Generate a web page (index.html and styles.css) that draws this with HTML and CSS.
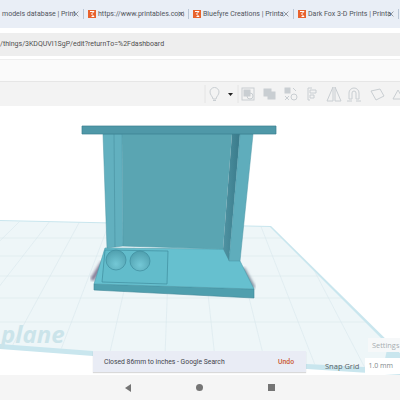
FILE: index.html
```html
<!DOCTYPE html>
<html lang="en">
  <head>
    <meta charset="UTF-8" />
    <title>Tinkercad</title>
    <link rel="stylesheet" href="styles.css">
  </head>
  <body>
    <div class="tabs">
      <div class="tab tab-first">
        <span class="tab-title">models database | Print</span>
        <svg class="tab-close" viewBox="0 0 10 10"><path d="M1 1L9 9M9 1L1 9" /></svg>
      </div>
      <div class="tab">
        <svg class="favicon" viewBox="0 0 8 8"><rect width="8" height="8" /><path d="M2 1.5H6L3.5 4L6 6.5H3.5" /></svg>
        <span class="tab-title">https://www.printables.com</span>
        <svg class="tab-close" viewBox="0 0 10 10"><path d="M1 1L9 9M9 1L1 9" /></svg>
      </div>
      <div class="tab">
        <svg class="favicon" viewBox="0 0 8 8"><rect width="8" height="8" /><path d="M2 1.5H6L3.5 4L6 6.5H3.5" /></svg>
        <span class="tab-title">Bluefyre Creations | Printa</span>
        <svg class="tab-close" viewBox="0 0 10 10"><path d="M1 1L9 9M9 1L1 9" /></svg>
      </div>
      <div class="tab">
        <svg class="favicon" viewBox="0 0 8 8"><rect width="8" height="8" /><path d="M2 1.5H6L3.5 4L6 6.5H3.5" /></svg>
        <span class="tab-title">Dark Fox 3-D Prints | Printa</span>
        <svg class="tab-close" viewBox="0 0 10 10"><path d="M1 1L9 9M9 1L1 9" /></svg>
      </div>
    </div>

    <div class="address-row">
      <div class="address">/things/3KDQUVI1SgP/edit?returnTo=%2Fdashboard</div>
    </div>
    <div class="blank-row"></div>

    <div class="tools">
      <svg class="tool-icons" viewBox="200 0 200 24">
        <path class="sep" d="M205 3V21" />
        <!-- light bulb -->
        <path d="M210 10a4.500 4.500 0 0 1 9 0c0 3-2.500 4-3 7h-3c-.5-3-3-4-3-7zM213 18.500h3" />
        <path class="fill-dark" d="M228 11h5l-2.500 3z" />
        <path class="sep" d="M238 3V21" />
        <!-- group -->
        <rect x="242" y="6" width="12" height="12" />
        <rect class="fill" x="244" y="8" width="6" height="6" />
        <circle cx="250" cy="14" r="3" />
        <!-- ungroup -->
        <rect class="fill" x="264" y="7" width="7" height="7" />
        <rect class="fill" x="268" y="10" width="7" height="7" />
        <!-- hole shapes -->
        <rect class="fill" x="285" y="6" width="5" height="5" />
        <circle cx="294" cy="15" r="3" />
        <path d="M285 14l4 4M289 14l-4 4M293 6l3 3" />
        <!-- align -->
        <path d="M308 6v12M308 6h4M308 18h2M310 8h6v3h-6zM310 13h4v3h-4z" />
        <!-- mirror -->
        <path d="M333 5v14l-6 0zM335 5v14h6z" />
        <!-- cruise -->
        <path d="M349 17v-6a5 5 0 0 1 10 0v6h-3v-6a2 2 0 0 0-4 0v6zM347 19h5M356 19h5" />
        <!-- ruler -->
        <path d="M371 9l9-2l4 7l-8 4z" />
        <path d="M393 17l5-9l5 9z" />
      </svg>
    </div>

    <div class="canvas">
      <svg class="scene" viewBox="0 106 400 269">
        <defs>
          <filter id="soft"><feGaussianBlur stdDeviation="1.5" /></filter>
          <clipPath id="plane-clip">
            <polygon points="0,221 270,227 388,345 383,368 307,364 93,351 0,344" />
          </clipPath>
          <radialGradient id="ball" cx="0.5" cy="0.7" r="0.7">
            <stop offset="0" stop-color="#74c8d6" />
            <stop offset="1" stop-color="#4f9fae" />
          </radialGradient>
          <linearGradient id="inner-side" x1="0" x2="1" y1="0" y2="0">
            <stop offset="0" stop-color="#4f93a2" />
            <stop offset="1" stop-color="#397a8a" />
          </linearGradient>
        </defs>

        <!-- workplane -->
        <polygon points="0,349 93,356 307,369 400,375 400,353 271,226 0,220" fill="#c9e6ee" />
        <polygon points="0,221 270,227 388,345 383,368 307,364 93,351 0,344" fill="#eef6f8" />
        <g class="grid" clip-path="url(#plane-clip)">
          <path d="M20 221L-110 350M50 221L-50 350M80 221L10 350M110 221L60 352M140 221L110 352M170 221L165 356M200 221L215 358M230 221L265 362M260 224L315 365M290 224L365 368" />
          <path d="M0 238H300M0 256H320M0 276H340M0 298H360M0 322H384" />
        </g>
        <text class="plane-label" x="1" y="343">plane</text>

        <!-- shadows -->
        <path d="M92 280L103 262" stroke="#7a6f8c" stroke-width="4" filter="url(#soft)" />
        <path d="M243 268L254 288" stroke="#6f7f90" stroke-width="3" filter="url(#soft)" />

        <!-- base -->
        <polygon points="94,284 254,289 254,298 94,290" fill="#4f9fae" stroke="#3e8797" stroke-width="0.6" />
        <polygon points="105,248 223,249 240,261 254,289 94,284" fill="#66c0cf" stroke="#4c9aa9" stroke-width="0.6" />

        <!-- back wall and columns -->
        <polygon points="122,134 232,134 223,249 123,246" fill="#5aa5b2" />
        <polygon points="103,134 122,134 123,246 107,248" fill="#62b0bf" stroke="#4a94a4" stroke-width="0.5" />
        <path d="M114 134L115 247" stroke="#4a94a4" stroke-width="0.7" />
        <polygon points="232,134 240,134 229,261 223,249" fill="url(#inner-side)" />
        <polygon points="240,134 253,134 240,261 229,261" fill="#5fadbc" stroke="#4a94a4" stroke-width="0.5" />
        <path d="M123 246L223 249" stroke="#4f9dac" stroke-width="0.7" />

        <!-- top slab -->
        <polygon points="82,126 276,126 276,134 82,134" fill="#4f98a8" stroke="#3b7e8f" stroke-width="0.7" />

        <!-- inset and spheres -->
        <polygon points="105,250 168,251 167,284 102,282" fill="#62bccb" stroke="#3f8d9d" stroke-width="0.7" />
        <circle cx="116" cy="260" r="10" fill="url(#ball)" stroke="#3f8d9d" stroke-width="0.7" />
        <circle cx="140" cy="261" r="10" fill="url(#ball)" stroke="#3f8d9d" stroke-width="0.7" />
      </svg>

      <div class="settings">Settings</div>
      <div class="snap">
        <span class="snap-label">Snap Grid</span>
        <span class="snap-value">1.0 mm</span>
      </div>
      <div class="toast">
        <span>Closed 86mm to inches - Google Search</span>
        <span class="undo">Undo</span>
      </div>
    </div>

    <div class="nav">
      <span class="nav-back"></span>
      <span class="nav-home"></span>
      <span class="nav-recent"></span>
    </div>
  </body>
</html>
```

FILE: styles.css
```css
body {
  margin: 0;
  width: 400px;
  height: 400px;
  overflow: hidden;
  display: flex;
  flex-direction: column;
  font-family: Roboto, "Liberation Sans", sans-serif;
  color: #555;
  background: #fff;
}

.tabs {
  height: 28px;
  flex: none;
  display: flex;
  align-items: center;
  background: #e9eef6;
  overflow: hidden;
}

.tab {
  width: 105px;
  height: 10px;
  flex: none;
  display: flex;
  align-items: center;
  gap: 2px;
  padding: 0 4px 0 4px;
  box-sizing: border-box;
  border-right: 1px solid #b9c6d6;
}

.tab-first {
  width: 84px;
  padding-left: 2px;
}

.tab-title {
  flex: 1;
  min-width: 0;
  font-size: 7px;
  line-height: 10px;
  white-space: nowrap;
  color: #50555c;
}

.favicon {
  width: 8px;
  height: 8px;
  flex: none;
}

.favicon rect {
  fill: #e8622c;
}

.favicon path {
  fill: none;
  stroke: #fff;
  stroke-width: 1;
}

.tab-close {
  width: 6px;
  height: 6px;
  flex: none;
}

.tab-close path {
  fill: none;
  stroke: #5a6068;
  stroke-width: 1;
}

.address-row {
  height: 32px;
  flex: none;
  box-sizing: border-box;
  padding: 5px 0 3px;
  background: #fff;
  border-bottom: 1px solid #eee;
}

.address {
  height: 23px;
  background: #eeeeee;
  font-size: 7px;
  line-height: 23px;
  white-space: nowrap;
  color: #4f4f4f;
}

.blank-row {
  height: 22px;
  flex: none;
  box-sizing: border-box;
  background: #fafafa;
  border-bottom: 1px solid #e6e6e6;
}

.tools {
  height: 24px;
  flex: none;
  display: flex;
  justify-content: flex-end;
  background: #f3f3f3;
  overflow: hidden;
}

.tool-icons {
  width: 200px;
  height: 24px;
  flex: none;
}

.tool-icons * {
  fill: none;
  stroke: #c9ced2;
  stroke-width: 1;
}

.tool-icons .fill {
  fill: #c9ced2;
}

.tool-icons .fill-dark {
  fill: #222;
  stroke: none;
}

.tool-icons .sep {
  stroke: #e4e4e4;
}

.canvas {
  flex: 1;
  position: relative;
  background: #fff;
}

.scene {
  display: block;
  width: 400px;
  height: 269px;
}

.grid path {
  fill: none;
  stroke: #d5e5ea;
  stroke-width: 0.5;
}

.plane-label {
  font-family: "Open Sans", "Liberation Sans", sans-serif;
  font-size: 24px;
  font-weight: 700;
  font-style: italic;
  fill: #cbe4ea;
}

.toast {
  position: absolute;
  left: 93px;
  top: 245px;
  width: 213px;
  height: 21px;
  box-sizing: border-box;
  padding: 0 12px 0 11px;
  display: flex;
  align-items: center;
  justify-content: space-between;
  background: #e9ecf5;
  box-shadow: 0 1px 1px rgba(0, 0, 0, 0.15);
  font-size: 6.8px;
  color: #3f444c;
}

.undo {
  color: #c9572f;
  font-weight: 500;
}

.snap {
  position: absolute;
  left: 325px;
  top: 252px;
  width: 75px;
  display: flex;
  align-items: center;
  gap: 6px;
  white-space: nowrap;
  font-family: "Open Sans", "Liberation Sans", sans-serif;
  font-size: 7.5px;
  color: #5c6468;
}

.snap-value {
  flex: 1;
  height: 16px;
  line-height: 16px;
  padding-left: 3px;
  font-size: 7px;
  background: #fff;
  color: #80878b;
}

.settings {
  position: absolute;
  left: 368px;
  top: 232px;
  width: 32px;
  height: 14px;
  line-height: 14px;
  padding-left: 4px;
  box-sizing: border-box;
  background: #f6f8f9;
  font-family: "Open Sans", "Liberation Sans", sans-serif;
  font-size: 7.4px;
  color: #a8aeb2;
  white-space: nowrap;
}

.nav {
  height: 25px;
  flex: none;
  box-sizing: border-box;
  padding: 0 125px;
  display: flex;
  align-items: center;
  justify-content: space-between;
  background: #f5f5f5;
}

.nav-back {
  width: 0;
  height: 0;
  border-top: 4px solid transparent;
  border-bottom: 4px solid transparent;
  border-right: 6px solid #757575;
}

.nav-home {
  width: 7px;
  height: 7px;
  border-radius: 50%;
  background: #757575;
}

.nav-recent {
  width: 7px;
  height: 7px;
  background: #757575;
}
```
